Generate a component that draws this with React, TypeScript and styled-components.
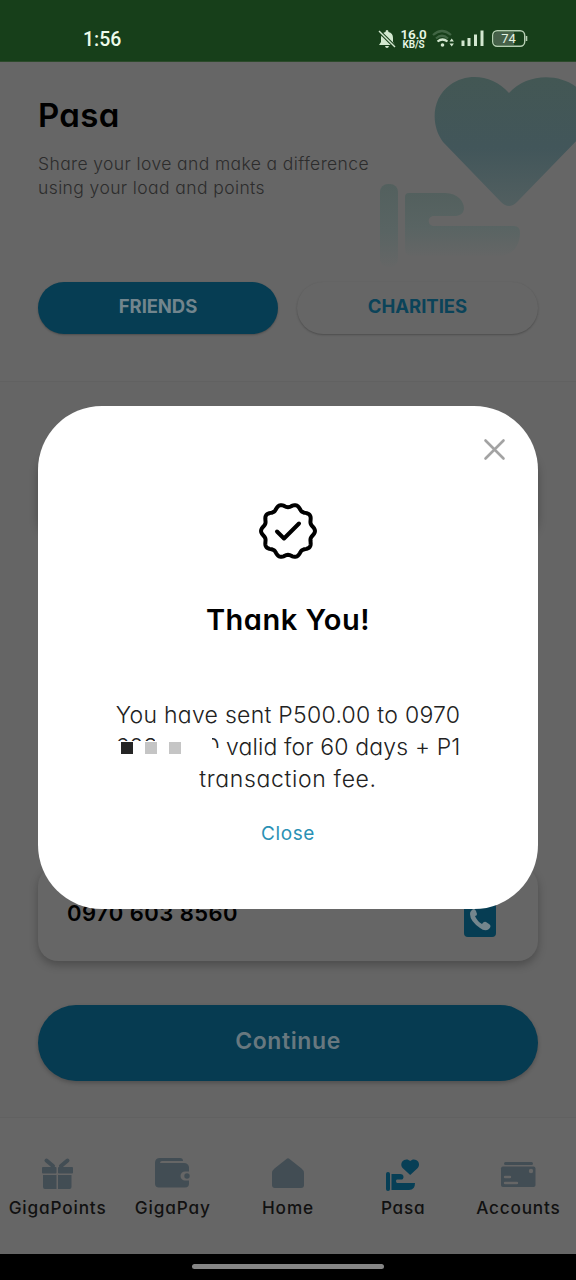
import React from "react";
import styled, { createGlobalStyle } from "styled-components";

const Global = createGlobalStyle`
  *{box-sizing:border-box}
  body{margin:0;background:#666;font-family:Inter,"Open Sans",sans-serif;font-feature-settings:"cv11","ss03";}
`;
const Screen = styled.main`position:relative;width:576px;height:1280px;display:flex;flex-direction:column;overflow:hidden;background:#656565;`;
const Text = styled.span<{ $size: number; $weight?: number; $ls?: number; $color?: string; $lh?: number }>`
  display:block;white-space:nowrap;font-size:${p => p.$size}px;font-weight:${p => p.$weight ?? 400};
  letter-spacing:${p => p.$ls ?? 0}px;color:${p => p.$color ?? "#000"};line-height:${p => p.$lh ?? 24}px;
`;
const Title = styled(Text)`margin:41px 0 0;`;
const StatusBar = styled.header`
  height:62px;background:#173f1a;border-bottom:1px solid #2c4a2b;padding:27px 48px 0 83px;
  display:flex;justify-content:space-between;align-items:flex-start;font-family:Roboto,sans-serif;
`;
const StatusIcons = styled.div`display:flex;align-items:center;height:24px;`;
const Speed = styled.div`width:27px;margin:0 5px 0 4px;color:#e8f7e6;display:flex;flex-direction:column;align-items:center;
  font-weight:600;line-height:11px;font-size:13.5px;letter-spacing:-.2px;
  small{font-size:10px;line-height:9px;letter-spacing:-.1px;}`;
const Hero = styled.section`height:320px;padding:35px 37px 0 38px;border-bottom:1px solid #616161;background:#666;position:relative;`;
const HeroArt = styled.svg`position:absolute;right:0;top:0;`;
const Blurb = styled.div`margin-top:19px;`;
const Tabs = styled.div`display:grid;grid-template-columns:240px 241px;gap:19px;margin-top:82px;position:relative;`;
const Tab = styled.button<{ $active?: boolean }>`
  height:52px;border:0;border-radius:26px;padding:0 0 5px;font:inherit;display:flex;align-items:center;justify-content:center;
  background:${p => (p.$active ? "#063d53" : "#666")};box-shadow:0 1px 2px rgba(0,0,0,.25);
`;
const Form = styled.section`flex:1;padding:68px 38px 0;display:flex;flex-direction:column;`;
const Card = styled.div<{ $h: number; $mt?: number }>`
  height:${p => p.$h}px;flex:none;margin-top:${p => p.$mt ?? 0}px;border-radius:20px;background:#666;box-shadow:0 4px 8px rgba(0,0,0,.25);
  padding:0 42px 24px 29px;display:flex;align-items:flex-end;justify-content:space-between;
`;
const Continue = styled.button`height:76px;flex:none;margin-top:44px;border:0;border-radius:38px;background:#063b51;box-shadow:0 2px 4px rgba(0,0,0,.22);
  display:flex;justify-content:center;align-items:center;padding:0 0 4px;font:inherit;`;
const Nav = styled.nav`height:137px;border-top:1px solid #616161;background:#666;display:grid;grid-template-columns:repeat(5,1fr);padding-top:39px;`;
const NavItem = styled.div`display:flex;flex-direction:column;align-items:center;svg{margin-bottom:4px;}`;
const Gesture = styled.footer`height:26px;background:#000;display:flex;justify-content:center;padding-top:10px;`;
const Pill = styled.div`width:192px;height:5px;border-radius:3px;background:#858585;`;
const Dialog = styled.div`position:absolute;left:38px;top:406px;width:500px;height:503px;border-radius:64px;background:#fff;
  display:flex;flex-direction:column;align-items:center;padding-top:31px;`;
const Dismiss = styled.button`align-self:flex-end;margin-right:31px;width:25px;height:25px;border:0;background:none;padding:0;`;
const Seal = styled.svg`margin-top:39px;`;
const Message = styled.div`margin-top:61px;display:flex;flex-direction:column;align-items:center;`;
const Line = styled.div`display:flex;width:345px;justify-content:space-between;`;
const Masked = styled.span`position:relative;width:104px;height:32px;overflow:hidden;`;
const MaskArea = styled.span`position:absolute;left:0;top:10px;width:96px;height:22px;background:#fff;display:flex;gap:12px;padding:1px 0 0 5px;`;
const MaskEnd = styled.span`position:absolute;left:39px;top:0;width:57px;height:32px;background:#fff;`;
const MaskFoot = styled.span`position:absolute;right:0;top:17px;width:10px;height:15px;background:#fff;`;
const Block = styled.i<{ $c: string }>`width:12px;height:12px;background:${p => p.$c};`;

const muted = "#424d54";
const heart = "M17 32 3 18C-1 13 0 5 6 2c4-2 8-1 11 2 3-3 7-4 11-2 6 3 7 11 3 16Z";

function sealPath() {
  const pts: string[] = [];
  for (let i = 0; i <= 180; i++) {
    const a = (i / 180) * Math.PI * 2;
    const r = 25.4 + 1.55 * Math.cos(10 * a);
    pts.push(`${(29 + r * Math.cos(a)).toFixed(2)} ${(29 + r * Math.sin(a)).toFixed(2)}`);
  }
  return "M" + pts.join("L") + "Z";
}

const GiftIcon = () => (
  <svg width="34" height="34" viewBox="1 0 34 34" fill={muted}>
    <path d="M6.500 3.500 13 9M27.500 3.500 21 9" stroke={muted} strokeWidth="4" strokeLinecap="round" />
    <rect x="2" y="10" width="14.500" height="6.500" rx="1" /><rect x="18" y="10" width="15" height="6.500" rx="1" />
    <path d="M3 18h13.500v14H5q-2 0-2-2ZM18 18h13.500v12q0 2-2 2H18Z" />
  </svg>
);
const WalletIcon = () => (
  <svg width="38" height="34" viewBox="1 1 38 34" fill={muted}>
    <path d="M7 2h20q3 0 3 3H9q-2 0-2 2h24q4 0 5 4v4.500h-4a4.500 4.500 0 0 0 0 9h4v3q0 4-4 4H6q-4 0-4-4V7q0-5 5-5Z" /><circle cx="34" cy="20" r="2.700" />
  </svg>
);
const HomeIcon = () => (
  <svg width="34" height="34" viewBox="0 1 34 34"><path d="M15.500 3q1.500-1.300 3 0l12 9.500q2.500 2 2.500 4.500v12q0 3-3 3H4q-3 0-3-3V17q0-2.500 2.500-4.500Z" fill={muted} /></svg>
);
const PasaIcon = () => (
  <svg width="34" height="34" viewBox="0 0 34 34" fill="#073f56">
    <rect x="0" y="15" width="4" height="19" rx="2" />
    <path d="M5.500 17H14q3.500 0 3.500 3t-3.500 2.500H11q-1 0-1 1.500t1 2h18q0 7-6 7H5.500Z" />
    <path d={heart} transform="translate(15 2) scale(.54 .5)" />
  </svg>
);
const CardIcon = () => (
  <svg width="36" height="34" viewBox="0 0 36 34" fill={muted}>
    <rect x="4" y="5" width="29" height="3" rx="1.500" /><rect x="1" y="9.500" width="34.500" height="20.500" rx="2" />
    <path d="M5 20h5M5 26h12" stroke="#666" strokeWidth="2.400" strokeLinecap="round" /><circle cx="31" cy="14" r="2.200" fill="#666" />
  </svg>
);

const items: [string, () => React.JSX.Element, number][] = [
  ["GigaPoints", GiftIcon, 0.85], ["GigaPay", WalletIcon, 0.9], ["Home", HomeIcon, 0.9], ["Pasa", PasaIcon, 0.8], ["Accounts", CardIcon, 0.8],
];

export default function App() {
  return (
    <Screen>
      <Global />
      <StatusBar>
        <Text $size={19.5} $weight={500} $color="#edfbea" $lh={25}>1:56</Text>
        <StatusIcons>
          <svg width="18" height="20" viewBox="0 0 18 20" fill="#d3e8d0">
            <path d="M9 1q1.500 0 1.500 2Q15 4 15 9v4l2 3H1l2-3V9q0-5 4.500-6Q7.500 1 9 1ZM7 17h4q-.5 2-2 2t-2-2Z" />
            <path d="M1 2 17 18" stroke="#173f1a" strokeWidth="3.400" /><path d="M1 2 17 18" stroke="#d3e8d0" strokeWidth="1.400" />
          </svg>
          <Speed><span>16.0</span><small>KB/S</small></Speed>
          <svg width="96" height="22" viewBox="-3 0 96 22" fill="none">
            <g transform="translate(-3 0)">
              <path d="M1 7q9-8 18 0M4 10.500q6-5.500 12 0" stroke="#416544" strokeWidth="2.200" />
              <path d="M5.500 13.500q5-4 10 0" stroke="#d3e8d0" strokeWidth="2.200" /><circle cx="10.500" cy="17" r="1.800" fill="#d3e8d0" />
              <path d="M17.500 13.500 19.700 10.500 21.900 13.500ZM17.500 15.500 19.700 18.500 21.900 15.500Z" fill="#d3e8d0" />
            </g>
            <path d="M28 12.500v5.500M34 10v8M40.500 6.500V18M47 2.500V18" stroke="#d3e8d0" strokeWidth="3" />
            <path d="M62 4h17v13H62q-3 0-3-3V7q0-3 3-3Z" fill="#47614a" />
            <rect x="57.700" y="2.700" width="32" height="15.600" rx="4.500" stroke="#b5cdb2" strokeWidth="1.400" />
            <path d="M91.500 8v5" stroke="#b5cdb2" strokeWidth="1.600" />
            <text x="73.500" y="15.300" textAnchor="middle" fontSize="13" fontWeight="400" fill="#e3f3e1">74</text>
          </svg>
        </StatusIcons>
      </StatusBar>
      <Hero>
        <HeroArt width="216" height="220" viewBox="360 62 216 220">
          <defs>
            <linearGradient id="hg" x1="0" y1="0" x2="0" y2="1"><stop offset="0" stopColor="#435754" /><stop offset=".55" stopColor="#42565a" /><stop offset="1" stopColor="#525f60" /></linearGradient>
            <linearGradient id="fg" x1="0" y1="0" x2="0" y2="1"><stop offset="0" stopColor="#53605e" /><stop offset=".55" stopColor="#596463" /><stop offset="1" stopColor="#656666" /></linearGradient>
          </defs>
          <path d="M509 93C493 75 468 72 450 85C432 98 430 124 443 142L501 202Q509 210 517 202L580 137V90C562 73 528 72 509 93Z" fill="url(#hg)" />
          <rect x="380" y="184" width="18" height="83" rx="8" fill="url(#fg)" />
          <path d="M409 193H445C458 193 464 202 464 208C464 214 459 216 455 216H434C427 216 427 226 434 226H514Q520 226 520 233C520 247 511 256 499 256H412Q405 256 405 249V197Q405 193 409 193Z" fill="url(#fg)" />
        </HeroArt>
        <Text $size={33} $weight={600} $ls={0.3} $lh={36}>Pasa</Text>
        <Blurb>
          <Text $size={17.5} $weight={300} $ls={0.39} $color="#2c2c2c">Share your love and make a difference</Text>
          <Text $size={17.5} $weight={300} $ls={0.4} $color="#2c2c2c">using your load and points</Text>
        </Blurb>
        <Tabs>
          <Tab $active><Text $size={18.5} $weight={700} $ls={-0.1} $color="#72858d">FRIENDS</Text></Tab>
          <Tab><Text $size={18.5} $weight={700} $ls={-0.02} $color="#0b4359">CHARITIES</Text></Tab>
        </Tabs>
      </Hero>
      <Form>
        <Card $h={85} />
        <Card $h={95} $mt={331}>
          <Text $size={22} $weight={600} $ls={0.45} $lh={47}>0970 603 8560</Text>
          <svg width="32" height="34" viewBox="0 0 32 34"><rect width="32" height="34" rx="4" fill="#063d53" />
            <path d="M7 8q3-4 5 0l1 3q0 2-2 2 2 5 7 8 2-3 4-2l3 2q3 2 0 5-4 3-9-1Q6 18 6 11 6 9 7 8Z" fill="#74868d" /></svg>
        </Card>
        <Continue><Text $size={23} $weight={600} $ls={0.6} $color="#68787f">Continue</Text></Continue>
      </Form>
      <Nav>
        {items.map(([label, Icon, ls]) => (
          <NavItem key={label}><Icon /><Text $size={17.2} $weight={500} $ls={ls} $lh={26} $color="#111">{label}</Text></NavItem>
        ))}
      </Nav>
      <Gesture><Pill /></Gesture>
      <Dialog role="dialog">
        <Dismiss aria-label="Dismiss"><svg width="25" height="25" viewBox="0 0 25 25"><path d="M3.500 3.500 21.500 21.500M21.500 3.500 3.500 21.500" stroke="#a3a3a3" strokeWidth="2.600" strokeLinecap="round" /></svg></Dismiss>
        <Seal width="60" height="60" viewBox="-1 -1 60 60" fill="none" stroke="#000" strokeLinecap="round" strokeLinejoin="round">
          <path d={sealPath()} strokeWidth="4" /><path d="M18 29.500 25 36.500 40 21.500" strokeWidth="4" />
        </Seal>
        <Title as="h2" $size={29} $weight={600} $ls={0.5} $lh={36}>Thank You!</Title>
        <Message>
          <Text $size={23} $weight={300} $lh={32} $ls={0.28} $color="#222">You have sent P500.00 to 0970</Text>
          <Line>
            <Masked>
              <Text $size={23} $weight={300} $lh={32} $color="#222">603 8560</Text>
              <MaskEnd />
              <MaskArea><Block $c="#252525" /><Block $c="#c5c5c5" /><Block $c="#c5c5c5" /></MaskArea>
              <MaskFoot />
            </Masked>
            <Text $size={23} $weight={300} $lh={32} $ls={0.15} $color="#222">valid for 60 days + P1</Text>
          </Line>
          <Text $size={23} $weight={300} $lh={32} $ls={0.65} $color="#222">transaction fee.</Text>
        </Message>
        <Text $size={19} $weight={400} $color="#2a91b5" $ls={0.6} $lh={78}>Close</Text>
      </Dialog>
    </Screen>
  );
}
